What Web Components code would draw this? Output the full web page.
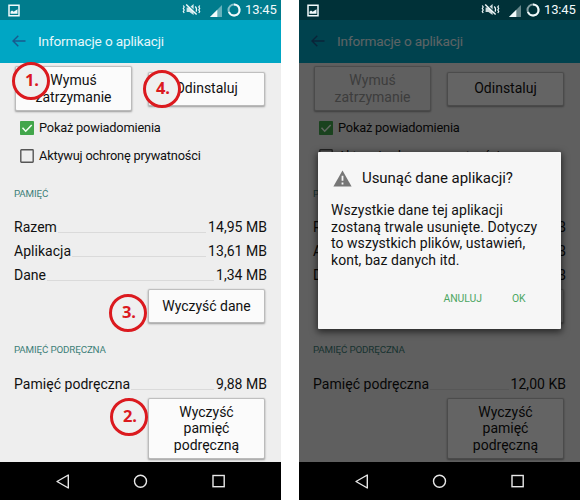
<!DOCTYPE html>
<html lang="pl">
<head>
<meta charset="utf-8">
<title>Informacje o aplikacji</title>
<style>
body{margin:0;width:580px;height:500px;overflow:hidden;background:#fff;font-family:Roboto,sans-serif;color:#111;display:flex;gap:18px}
step-mark{position:absolute}
</style>
</head>
<body>
<phone-screen>
  <status-bar slot="status"></status-bar>
  <app-bar slot="bar">Informacje o aplikacji</app-bar>
  <app-details cache="9,88 MB"></app-details>
  <nav-bar slot="nav"></nav-bar>
</phone-screen>
<phone-screen dim>
  <status-bar slot="status" dim></status-bar>
  <app-bar slot="bar">Informacje o aplikacji</app-bar>
  <app-details cache="12,00 KB" stopped></app-details>
  <confirm-dialog slot="dialog">
    <span slot="title">Usunąć dane aplikacji?</span>
    Wszystkie dane tej aplikacji<br>zostaną trwale usunięte. Dotyczy<br>to wszystkich plików, ustawień,<br>kont, baz danych itd.
  </confirm-dialog>
  <nav-bar slot="nav"></nav-bar>
</phone-screen>
<step-mark style="left:12px;top:62px">1.</step-mark>
<step-mark style="left:143px;top:70px">4.</step-mark>
<step-mark style="left:109px;top:294px">3.</step-mark>
<step-mark style="left:110px;top:398px">2.</step-mark>
<script>
const define = (name, html) => customElements.define(name, class extends HTMLElement {
  constructor() {
    super();
    const t = document.createElement('template');
    t.innerHTML = html;
    this.attachShadow({mode: 'open'}).append(t.content.cloneNode(true));
  }
});

define('status-bar', `<style>
:host{display:flex;box-sizing:border-box;height:20px;padding:0 4px 0 8px;align-items:center;background:#007c8d;color:#f2fafb;position:relative;--bg:#007c8d}
:host([dim]){background:#003138;z-index:3;--bg:#003138}
.sp{flex:1} svg{display:block;flex:none}
span{font-size:13px;line-height:20px;width:32px;white-space:nowrap;letter-spacing:-.15px}
</style>
<svg width="12" height="13" viewBox="0 0 12 13"><path d="M1 1.2h10v10.6H1z" fill="none" stroke="currentColor" stroke-width="1.5"/><path d="M2.5 9.8V7.7L4 6.5l1.7 1.3 3.8-2.5v4.5z" fill="currentColor"/></svg>
<div class="sp"></div>
<svg width="19" height="13" viewBox="0 0 19 13" style="margin:-1px 9px 0 0"><path d="M1.3 2.5l.9 1.5-.9 1.5.9 1.5-.9 1.5.9 1.5M17.7 2.5l-.9 1.5.9 1.5-.9 1.5.9 1.5-.9 1.5" fill="none" stroke="currentColor" stroke-width="1.2"/><path d="M4.6 4.4h2.8L11.6 1v11L7.4 9H4.6z" fill="currentColor" opacity=".85"/><path d="M13.2 3.5a4 4 0 0 1 0 6" fill="none" stroke="currentColor" stroke-width="1.3"/><path d="M5.2 1.2l10 9.6" style="stroke:var(--bg)" stroke-width="1.3"/><path d="M4.2 1.6l10.4 10" stroke="currentColor" stroke-width="1.4"/></svg>
<svg width="12" height="12" viewBox="0 0 12 12" style="margin:1px 5px 0 0"><path d="M0 12L12 0v12z" fill="currentColor" opacity=".42"/><path d="M0 12L7.3 4.7V12z" fill="currentColor"/></svg>
<svg width="14" height="14" viewBox="0 0 14 14" style="margin:-1px 4px 0 0"><circle cx="7" cy="7" r="5.5" fill="none" stroke="currentColor" stroke-width="2" opacity=".55"/><path d="M7 1.5a5.5 5.5 0 1 1-5.1 7.5" fill="none" stroke="currentColor" stroke-width="2"/></svg>
<span>13:45</span>`);

define('app-bar', `<style>
:host{display:flex;box-sizing:border-box;height:43px;padding:0 0 0 12px;align-items:center;gap:12px;background:#00a6c4;color:#e6f7fa;font-size:13.6px;line-height:43px;white-space:nowrap;letter-spacing:-.15px}
svg{margin-top:-1px}
</style>
<svg width="14" height="12" viewBox="0 0 14 12"><path d="M13.5 6H1.5M6.3.8L1 6l5.3 5.2" fill="none" stroke="#19598d" stroke-width="1.4"/></svg>
<span><slot></slot></span>`);

define('flat-button', `<style>
:host{display:flex;box-sizing:border-box;width:115px;height:32px;align-items:center;justify-content:center;text-align:center;background:#fbfbfb;border-radius:1px;box-shadow:0 0 1px .5px #bdbdbd,0 1px 2px .5px #999;font-size:14px;line-height:16.6px;white-space:nowrap}
:host([off]){color:#999;background:#f0f0f0}
</style><slot></slot>`);

define('check-row', `<style>
:host{display:flex;height:28px;align-items:center;gap:5.5px;padding-left:19.5px;font-size:12.8px;line-height:28px;white-space:nowrap;letter-spacing:-.19px}
svg{display:block}
.on{display:none} :host([checked]) .on{display:block} :host([checked]) .off{display:none}
</style>
<svg class="on" width="14" height="14"><rect width="14" height="14" rx=".8" fill="#42a64b"/><path d="M2.5 6.8l3.2 3.4 6-6.3" fill="none" stroke="#f4fff4" stroke-width="1.5"/></svg>
<svg class="off" width="14" height="14"><rect x=".8" y=".8" width="12.4" height="12.4" rx=".6" fill="none" stroke="#555" stroke-width="1.4"/></svg>
<span><slot></slot></span>`);

define('size-row', `<style>
:host{display:flex;height:24px;padding:0 14px;align-items:flex-start;font-size:14px;line-height:24px;white-space:nowrap;letter-spacing:.03px}
i{flex:1;height:17px;border-bottom:1px solid #dadada;margin:0 2px 0 1px}
</style><span><slot></slot></span><i></i><span><slot name="value"></slot></span>`);

define('section-title', `<style>
:host{display:block;height:14px;padding-left:14px;font-size:9.8px;line-height:14px;color:#3d7f78;letter-spacing:-.15px;white-space:nowrap}
</style><slot></slot>`);

define('nav-bar', `<style>
:host{display:block;height:38px;background:#000;position:relative;z-index:3}
svg{display:block}
</style>
<svg width="281" height="38" fill="none" stroke="#e8e8e8" stroke-width="1.4"><path d="M68.3 13v13L57 19.5z" stroke-linejoin="round"/><circle cx="140.5" cy="19.3" r="6"/><rect x="213" y="13.5" width="11.2" height="11.2"/></svg>`);

define('confirm-dialog', `<style>
:host{display:block;box-sizing:border-box;position:absolute;left:19px;top:152px;width:243px;height:177px;z-index:2;background:#f6f6f6;border-radius:1px;box-shadow:0 2px 7px 1px #0009;padding:16px 13px 0;color:#111;font-size:14px;line-height:16.5px;white-space:nowrap;letter-spacing:.05px}
.head{display:flex;align-items:center;gap:10px;padding-left:2px;height:20px;font-size:15px;margin-bottom:14px;letter-spacing:-.06px}
.acts{display:flex;justify-content:flex-end;gap:30px;font-size:10.4px;line-height:14px;color:#4da663;margin-top:24px;padding-right:22.5px;letter-spacing:-.05px}
</style>
<div class="head"><svg width="19" height="17" viewBox="0 0 19 17"><path d="M9.5.5L18.6 16.5H.4z" fill="#777"/><path d="M9.5 5.8v5M9.5 12.5v2" stroke="#f6f6f6" stroke-width="1.8"/></svg><span><slot name="title"></slot></span></div>
<div><slot></slot></div>
<div class="acts"><span>ANULUJ</span><span>OK</span></div>`);

define('step-mark', `<style>
:host{display:flex;box-sizing:border-box;width:38px;height:38px;border:2.6px solid #db1a1f;border-radius:50%;background:#eff0f0;align-items:center;justify-content:center;font:bold 16.5px/32px "Open Sans",sans-serif;color:#db1a1f;z-index:5}
:host{border-width:3px}
span{margin:-2px 0 0 2px}
</style><span><slot></slot></span>`);

customElements.define('app-details', class extends HTMLElement {
  constructor() {
    super();
    this.attachShadow({mode: 'open'}).innerHTML = `<style>
:host{display:block;box-sizing:border-box;height:399px;background:#eee;padding-top:4px}
.top{display:flex;align-items:center;gap:18px;padding-left:16px;height:43px;margin-bottom:4px}
.force{height:43px} .right{margin-left:149px}
.s1{margin-top:17px;margin-bottom:14px} .s2{margin-top:21px;margin-bottom:15px}
</style>
<div class="top"><flat-button class="force" ${this.hasAttribute('stopped') ? 'off' : ''}><span>Wymuś<br>zatrzymanie</span></flat-button><flat-button>Odinstaluj</flat-button></div>
<check-row checked>Pokaż powiadomienia</check-row>
<check-row>Aktywuj ochronę prywatności</check-row>
<section-title class="s1">PAMIĘĆ</section-title>
<size-row>Razem<span slot="value">14,95 MB</span></size-row>
<size-row>Aplikacja<span slot="value">13,61 MB</span></size-row>
<size-row>Dane<span slot="value">1,34 MB</span></size-row>
<flat-button class="right" style="margin-top:3px">Wyczyść dane</flat-button>
<section-title class="s2">PAMIĘĆ PODRĘCZNA</section-title>
<size-row>Pamięć podręczna<span slot="value">${this.getAttribute('cache')}</span></size-row>
<flat-button class="right" style="margin-top:3px;height:59px"><span>Wyczyść<br>pamięć<br>podręczną</span></flat-button>`;
  }
});

define('phone-screen', `<style>
:host{display:block;width:281px;height:500px;flex:none;position:relative;overflow:hidden}
.shade{display:none;position:absolute;inset:0;background:#0009;z-index:1}
:host([dim]) .shade{display:block}
</style>
<slot name="status"></slot><slot name="bar"></slot><slot></slot><slot name="nav"></slot><div class="shade"></div><slot name="dialog"></slot>`);
</script>
</body>
</html>
